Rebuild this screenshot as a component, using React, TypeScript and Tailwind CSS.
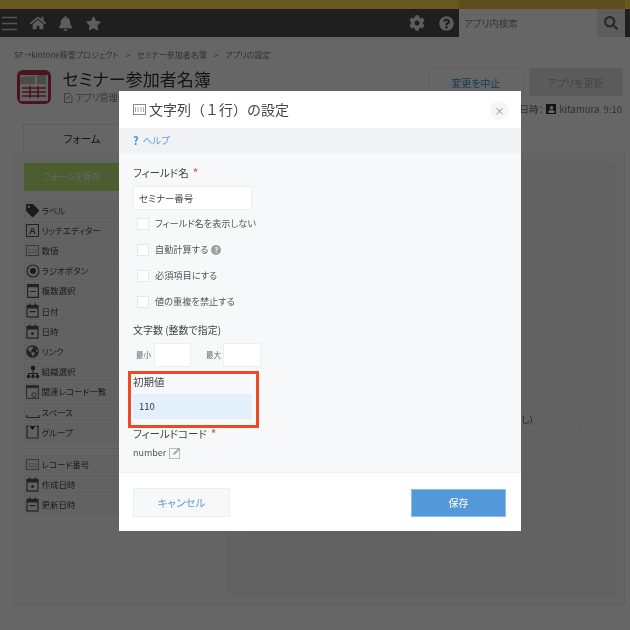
import React from "react";
import { FaHome, FaBell, FaStar, FaCog, FaQuestionCircle, FaSearch, FaTag, FaGlobeAmericas, FaUser } from "react-icons/fa";

const font = "font-['Noto_Sans_CJK_JP','Liberation_Sans',sans-serif] [font-feature-settings:'palt']";

function Box({ t }: { t: string }) {
  return (
    <svg width="13" height="11" viewBox="0 0 16 13">
      <rect x="0.5" y="0.5" width="15" height="12" fill="none" stroke="#777" />
      <text x="8" y="9.5" fontSize="6.5" textAnchor="middle" fill="#999" fontFamily="Liberation Sans">{t}</text>
    </svg>
  );
}
function Cal({ kind }: { kind: "line" | "dot" }) {
  return (
    <svg width="13" height="15" viewBox="0 0 13 15">
      <rect x="1" y="2.5" width="11" height="11.5" fill="none" stroke="#555" strokeWidth="1.2" />
      <rect x="1" y="2" width="11" height="3.5" fill="#555" />
      <rect x="3" y="0.5" width="1.5" height="2.5" fill="#555" />
      <rect x="8.5" y="0.5" width="1.5" height="2.5" fill="#555" />
      {kind === "line" ? <rect x="3.5" y="8" width="6" height="1.2" fill="#555" /> : <circle cx="6.5" cy="9.5" r="1.5" fill="#555" />}
    </svg>
  );
}
const icons: React.ReactNode[] = [
  <FaTag size={13} color="#444" />,
  <svg width="13" height="13" viewBox="0 0 13 13"><rect x="0.5" y="0.5" width="12" height="12" fill="none" stroke="#555" /><text x="6.5" y="10" fontSize="9.5" fontWeight="700" textAnchor="middle" fill="#555" fontFamily="Liberation Sans">A</text></svg>,
  <Box t="123" />,
  <svg width="14" height="14" viewBox="0 0 14 14"><circle cx="7" cy="7" r="6" fill="none" stroke="#555" strokeWidth="1.2" /><circle cx="7" cy="7" r="3" fill="#444" /></svg>,
  <svg width="12" height="14" viewBox="0 0 12 14"><rect x="0.6" y="0.6" width="10.8" height="12.8" fill="none" stroke="#555" strokeWidth="1.2" /><rect x="0.6" y="0.6" width="10.8" height="2.6" fill="#555" /><rect x="3" y="7" width="6" height="1" fill="#555" /></svg>,
  <Cal kind="line" />,
  <Cal kind="dot" />,
  <FaGlobeAmericas size={13} color="#555" />,
  <svg width="14" height="14" viewBox="0 0 14 14" fill="#444"><circle cx="7" cy="3" r="2.3" /><path d="M6.5 5h1v3h4.5v2h-1V9H7.5v1h-1V9H3v1H2V8h4.5z" /><circle cx="2.5" cy="11.5" r="1.8" /><circle cx="7" cy="11.5" r="1.8" /><circle cx="11.5" cy="11.5" r="1.8" /></svg>,
  <svg width="13" height="14" viewBox="0 0 13 14"><rect x="0.6" y="0.6" width="11.8" height="12.8" fill="none" stroke="#666" /><rect x="0.6" y="0.6" width="11.8" height="2.5" fill="#666" /><circle cx="8" cy="10" r="2.2" fill="none" stroke="#666" /></svg>,
  <svg width="14" height="14" viewBox="0 0 14 14"><path d="M1 10v2.5h12V10" fill="none" stroke="#555" strokeWidth="1.2" /></svg>,
  <svg width="13" height="14" viewBox="0 0 13 14"><path d="M3 1H1v12h11V1h-2" fill="none" stroke="#555" strokeWidth="1.2" /><path d="M3.5 1h6L6.5 5z" fill="#333" /></svg>,
];
const rows = ["ラベル", "リッチエディター", "数値", "ラジオボタン", "複数選択", "日付", "日時", "リンク", "組織選択", "関連レコード一覧", "スペース", "グループ"];

function Item({ icon, label }: { icon: React.ReactNode; label: string }) {
  return (
    <div className="h-[18px] mb-[2.2px] w-[112px] border border-[#eeeeee] bg-[#f6f6f6] flex items-center text-[8.5px] text-[#444]">
      <span className="w-[15px] mr-[1.5px] flex justify-center">{icon}</span>
      {label}
    </div>
  );
}

function Check({ label, help }: { label: string; help?: boolean }) {
  return (
    <div className="h-[26px] pl-[4px] flex items-center gap-[6px] text-[9.2px] text-[#555]">
      <span className="w-[12px] h-[12px] bg-white border border-[#e8e8e8]" />
      {label}
      {help && <span className="w-[10px] h-[10px] -ml-[3px] rounded-full bg-[#a0a0a0] text-white text-[7px] leading-[10px] text-center font-bold">?</span>}
    </div>
  );
}

export default function App() {
  return (
    <div className="w-[630px] h-[630px] overflow-hidden bg-[#666666]">
      <div className={`relative w-[630px] h-[630px] bg-white blur-[0.35px] ${font}`}>
        <div className="h-[9px] flex bg-[#ffdc50]">
          <div className="w-[459px]" />
          <div className="w-[166px] bg-[#e8c445]" />
          <div className="w-[5px]" />
        </div>
        <div className="h-[28px] bg-[#4f4f4f] flex items-center">
          <svg width="16" height="15" viewBox="0 0 16 15" className="ml-[2px]"><path d="M0 1.5h15M0 7.5h15M0 13.5h15" stroke="#d0d0d0" strokeWidth="1.6" /></svg>
          <FaHome size={16} color="#e8e8e8" className="ml-[12px]" />
          <FaBell size={15} color="#e8e8e8" className="ml-[12px]" />
          <FaStar size={15} color="#e8e8e8" className="ml-[13px]" />
          <FaCog size={16} color="#e8e8e8" className="ml-[308px]" />
          <FaQuestionCircle size={15} color="#e8e8e8" className="ml-[14px]" />
          <div className="ml-[5px] w-[138px] h-full bg-white flex items-center pl-[5px] text-[9.5px] text-[#888]">アプリ内検索</div>
          <div className="w-[28px] h-full bg-[#e8e8e8] flex items-center justify-center"><FaSearch size={14} color="#666" /></div>
        </div>
        <div className="pl-[14px] pt-[12px] h-[33px] text-[8px] leading-[11px] text-[#777] flex gap-[7px]">
          <span>SF→kintone移管プロジェクト</span><span>&gt;</span><span>セミナー参加者名簿</span><span>&gt;</span><span>アプリの設定</span>
        </div>
        <div className="h-[55px] flex">
          <svg width="34" height="34" viewBox="0 0 34 34" className="ml-[16.5px] -mt-[0.5px] shrink-0">
            <rect width="34" height="34" rx="6" fill="#b8304c" />
            <rect x="3" y="5" width="28" height="26" fill="#f4f4f4" />
            <path d="M3 7l15-1v8H3zM20 5h9v9h-9z" fill="#bbbbbb" />
            <path d="M5 18h24M5 22h24M5 26h24M13 16v12M21 16v12" stroke="#c03a4a" strokeWidth="1.6" />
          </svg>
          <div className="ml-[12px] w-[360px] shrink-0">
            <div className="text-[17px] leading-[20px] mt-[-1px] text-[#333] whitespace-nowrap">セミナー参加者名簿</div>
            <div className="text-[9px] text-[#888] mt-[2px] flex items-center gap-[3px]">
              <svg width="9" height="10" viewBox="0 0 9 10" className="ml-[1px]"><path d="M.5.5h5l2.5 2.5v6.5H.5zM2 6l4-3" fill="none" stroke="#999" /></svg>
              アプリ管理者
            </div>
          </div>
          <div className="ml-[6px] w-[95px] h-[28px] -mt-[2px] border border-[#eeeeee] text-[10px] text-[#3498db] flex items-center justify-center shrink-0">変更を中止</div>
          <div className="ml-[5px] w-[94px] h-[28px] -mt-[2px] bg-[#e3e3e3] text-[10px] text-[#aaa] flex items-center justify-center shrink-0">アプリを更新</div>
        </div>
        <div className="absolute right-[8px] top-[102px] flex items-center text-[9.5px] text-[#777] gap-[3px]">
          と日時：
          <span className="w-[10px] h-[10px] bg-[#333] flex items-center justify-center"><FaUser size={7} color="#fff" /></span>
          kitamura&nbsp; 9:10
        </div>
        <div className="ml-[23px] w-[118px] h-[29px] mt-[-1px] border border-b-0 border-[#e6e6e6] text-[10.5px] text-[#333] flex items-center justify-center">フォーム</div>
        <div className="ml-[14px] w-[611px] h-[452px] bg-[#fafafa] border border-[#f0f0f0] flex pt-[9px] pl-[9px]">
          <div className="w-[204px]">
            <div className="w-[96px] h-[28px] bg-[#bfe878] text-[9px] text-white flex items-center justify-center">フォームを保存</div>
            <div className="mt-[10px]">
              {rows.map((r, i) => <Item key={r} icon={icons[i]} label={r} />)}
            </div>
            <div className="border-t border-[#e8e8e8] mt-[7px] mb-[6px]" />
            <Item icon={<Box t="123" />} label="レコード番号" />
            <Item icon={<Cal kind="dot" />} label="作成日時" />
            <Item icon={<Cal kind="line" />} label="更新日時" />
          </div>
          <div className="w-[388px] h-[432px] bg-[#f6f6f6] border border-[#eeeeee] pt-[243px]">
            <div className="ml-[232px] w-[120px] h-[25px] border border-[#eeeeee] text-[9.5px] text-[#555] flex items-center pl-[47px]">(なし)</div>
            <div className="ml-[22px] mt-[40px] w-[175px] h-[63px] border border-[#f0f0f0]" />
          </div>
        </div>

        <div className="absolute inset-0 bg-black/60" />

        <div className="absolute left-[119px] top-[91px] w-[402px] h-[440px] bg-white flex flex-col">
          <div className="h-[37px] flex items-center pl-[14px] relative">
            <svg width="13" height="11" viewBox="0 0 13 11" className="mr-[3px]"><rect x="0.5" y="0.5" width="12" height="10" fill="#fff" stroke="#888" /><path d="M2.5 8V3M5 8V3M8 8V3M10.5 8V3" stroke="#aaa" /></svg>
            <span className="text-[14px] text-[#444] [font-feature-settings:normal]">文字列（１行）の設定</span>
            <span className="absolute right-[12px] top-[10px] w-[19px] h-[19px] rounded-full bg-[#f5f6f8] flex items-center justify-center text-[10px] leading-none text-[#888]">×</span>
          </div>
          <div className="h-[25px] bg-[#f1f2f4] pl-[14px] flex items-center gap-[4px] text-[9.5px] text-[#5b9fdc]">
            <span className="text-[11px] font-bold text-[#3498db] leading-none">?</span> ヘルプ
          </div>
          <div className="h-[320px] bg-[#f7f8fa] border-b border-[#f0f0f0] pl-[14px] relative text-[#444]">
            <div className="mt-[12px] h-[16px] text-[10.5px] leading-[16px] flex items-center">フィールド名 <span className="ml-[4px] text-[12px] text-[#e74c3c]">*</span></div>
            <div className="mt-[5px] w-[119px] h-[24px] bg-white border border-[#eeeeee] pl-[5px] flex items-center text-[9.5px]">セミナー番号</div>
            <div className="mt-[1px]">
              <Check label="フィールド名を表示しない" />
              <Check label="自動計算する" help />
              <Check label="必須項目にする" />
              <Check label="値の重複を禁止する" />
            </div>
            <div className="mt-[7px] h-[16px] text-[10px] leading-[16px]">文字数 (整数で指定)</div>
            <div className="mt-[5px] flex items-center text-[7.5px] text-[#666]">
              <span className="w-[21px] pl-[3px]">最小</span>
              <span className="w-[37px] h-[24px] bg-white border border-[#eeeeee]" />
              <span className="w-[32px] pl-[15px] whitespace-nowrap">最大</span>
              <span className="w-[38px] h-[24px] bg-white border border-[#eeeeee]" />
            </div>
            <div className="mt-[4px] -ml-[5.5px] w-[131.5px] h-[57px] border-[3px] border-[#ee4925] pl-[2.5px]">
              <div className="h-[16px] text-[10.5px] leading-[16px]">初期値</div>
              <div className="mt-[4px] w-[119px] h-[25px] bg-[#e3effa] pl-[6px] flex items-center text-[9.5px] text-[#333]">110</div>
            </div>
            <div className="h-[16px] mt-[-2px] text-[10.5px] leading-[16px] flex items-center">フィールドコード <span className="ml-[4px] text-[12px] text-[#e74c3c]">*</span></div>
            <div className="mt-[4px] flex items-center gap-[3px] text-[9px] text-[#555]">
              number
              <svg width="12" height="12" viewBox="0 0 12 12"><rect x="0.5" y="1.5" width="10" height="10" fill="none" stroke="#bbb" /><path d="M4 8l.5-2L10 .8l1.3 1.3L6 7.5z" fill="#aaa" /></svg>
            </div>
          </div>
          <div className="flex-1 flex items-center justify-between pl-[14px] pr-[15px] pt-[1px]">
            <div className="w-[97px] h-[29px] bg-[#f7f8fa] border border-[#eceef0] text-[10.5px] text-[#5b9fdc] flex items-center justify-center">キャンセル</div>
            <div className="w-[95px] h-[28px] bg-[#5398d9] border border-[#8fbde8] text-[10px] text-white flex items-center justify-center">保存</div>
          </div>
        </div>
      </div>
    </div>
  );
}
